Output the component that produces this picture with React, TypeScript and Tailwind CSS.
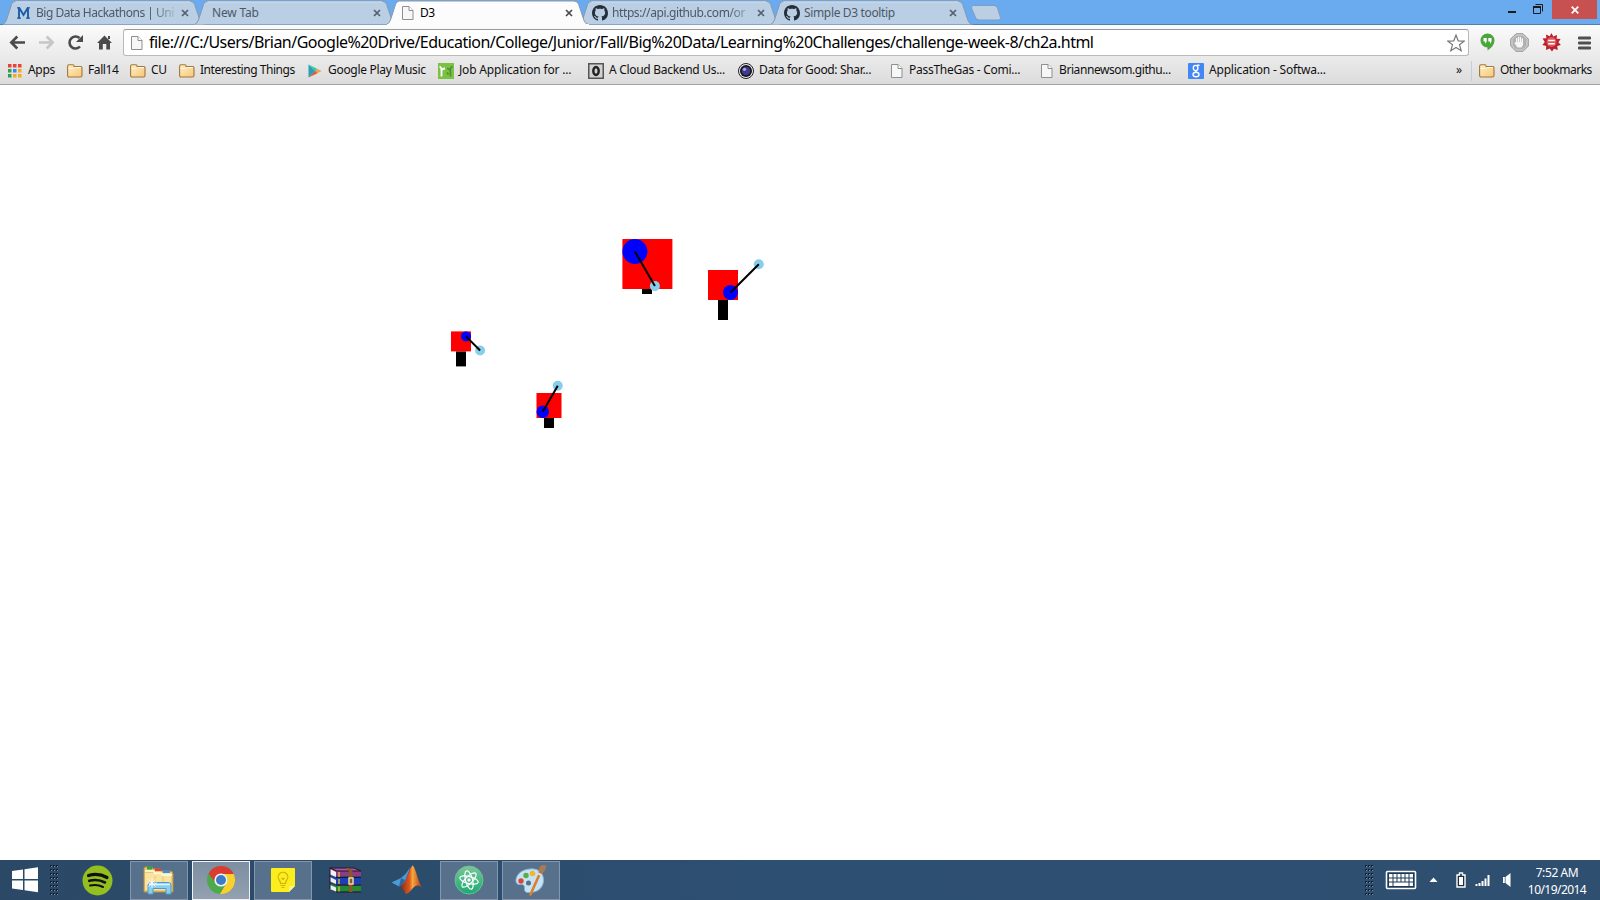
import type { ReactNode } from "react";

const UI = "font-['Noto_Sans','Open_Sans',sans-serif]";

/* ---------- small icons ---------- */

function PageIcon({ className = "" }: { className?: string }) {
  return (
    <svg width="12" height="14" viewBox="0 0 12 14" className={className}>
      <path d="M.5.5h6.500l4 4v9H.5z" fill="#f7f7f7" stroke="#8f8f8f" />
      <path d="M7 .5v4h4" fill="#fff" stroke="#8f8f8f" />
    </svg>
  );
}

function FolderIcon() {
  return (
    <svg width="16" height="14" viewBox="0 0 16 14">
      <defs>
        <linearGradient id="folder" x1="0" y1="0" x2="1" y2="1">
          <stop offset="0" stopColor="#fff0c4" />
          <stop offset="1" stopColor="#f5c678" />
        </linearGradient>
      </defs>
      <path d="M.6 11.500V2.200Q.6.7 2 .7h4q1 0 1.200 1.900h6.600q1.200 0 1.200 1.200v7.700q0 1.500-1.500 1.500h-11.400Q.6 13 .6 11.500z" fill="url(#folder)" stroke="#a5753a" strokeWidth="1.100" />
      <path d="M1.500 4.500h5l1-1h6.500" fill="none" stroke="#fffbe8" />
    </svg>
  );
}

function AppsIcon() {
  const colors = ["#ea4335", "#ea4335", "#ea4335", "#2f9e4f", "#3f83f0", "#f4ac1a", "#2f9e4f", "#f4ac1a", "#f4ac1a"];
  return (
    <svg width="14" height="14" viewBox="0 0 14 14">
      {colors.map((c, i) => (
        <rect key={i} x={(i % 3) * 5} y={Math.floor(i / 3) * 5} width="3.500" height="3.500" fill={c} />
      ))}
    </svg>
  );
}

function PlayIcon() {
  return (
    <svg width="14" height="14" viewBox="0 0 14 14">
      <path d="M.5.5 7.500 7 .5 13.500z" fill="#2d9db8" />
      <path d="M.5.5 9.500 5 7 7.500z" fill="#37c9a4" />
      <path d="M9.500 5 13.500 7l-4 2.300L7.300 7z" fill="#f0a04a" />
      <path d="M.5 13.500 7.300 7l2.200 2.300z" fill="#e0563f" />
    </svg>
  );
}

function JobIcon() {
  return (
    <svg width="16" height="16" viewBox="0 0 16 16">
      <rect width="16" height="16" fill="#7bc142" />
      <path d="M3.500 13.500V8Q3.500 5.500 7 5.500M1.500 3.500Q3.500 4 3.500 8" fill="none" stroke="#fff" strokeWidth="1.800" />
      <path d="M12.500 13.500V9Q12.500 6 9 5.500M14.500 3.500Q12.500 4 12.300 7M9 9.500l1.500 2" fill="none" stroke="#4a8f34" strokeWidth="1.600" />
    </svg>
  );
}

function ZeroIcon() {
  return (
    <svg width="16" height="16" viewBox="0 0 16 16">
      <rect x=".75" y=".75" width="14.500" height="14.500" fill="#d2d2d2" stroke="#555" strokeWidth="1.500" />
      <ellipse cx="8" cy="8" rx="2.700" ry="4" fill="none" stroke="#222" strokeWidth="2.400" />
    </svg>
  );
}

function LensIcon() {
  return (
    <svg width="16" height="16" viewBox="0 0 16 16">
      <circle cx="8" cy="8" r="7.500" fill="#eee" stroke="#222" />
      <circle cx="8" cy="8" r="6" fill="#15151f" />
      <circle cx="8" cy="8" r="4.300" fill="#403b8c" />
      <circle cx="6.500" cy="6.300" r="1.600" fill="#a9a8e2" />
    </svg>
  );
}

function GoogleIcon() {
  return (
    <svg width="16" height="16" viewBox="0 0 16 16">
      <rect width="16" height="16" rx="1" fill="#4387f4" />
      <g fill="none" stroke="#fff" strokeWidth="1.400">
        <ellipse cx="7.600" cy="5" rx="2.300" ry="2.600" />
        <path d="M9 2.300h2.500M8.500 7.500q-1.500.8 0 1.500" />
        <ellipse cx="8" cy="11.500" rx="3" ry="2.200" />
      </g>
    </svg>
  );
}

function GithubIcon() {
  return (
    <svg width="16" height="16" viewBox="0 0 16 16">
      <path
        fill="#26303b"
        d="M8 0C3.580 0 0 3.580 0 8c0 3.540 2.290 6.530 5.470 7.590.4.070.55-.17.55-.38 0-.19-.01-.82-.01-1.490-2.010.37-2.530-.49-2.690-.94-.09-.23-.48-.94-.82-1.130-.28-.15-.68-.52-.01-.53.63-.01 1.080.58 1.230.82.72 1.210 1.870.87 2.330.66.07-.52.28-.87.51-1.070-1.780-.2-3.640-.89-3.640-3.950 0-.87.31-1.590.82-2.150-.08-.2-.36-1.020.08-2.120 0 0 .67-.21 2.200.82.64-.18 1.320-.27 2-.27s1.360.09 2 .27c1.530-1.040 2.200-.82 2.200-.82.44 1.100.16 1.920.08 2.120.51.56.82 1.270.82 2.150 0 3.070-1.870 3.750-3.650 3.950.29.25.54.73.54 1.480 0 1.070-.01 1.930-.01 2.200 0 .21.15.46.55.38A8.010 8.010 0 0 0 16 8c0-4.420-3.580-8-8-8z"
      />
    </svg>
  );
}

function MichiganIcon() {
  return (
    <svg width="13" height="12" viewBox="0 0 13 12">
      <path d="M0 .8h3M10 .8h3M0 11.200h4M9 11.200h4" stroke="#1c5ca6" strokeWidth="1.200" />
      <path d="M2 .5v11M11 .5v11M2 .5 6.500 8 11 .5" fill="none" stroke="#1c5ca6" strokeWidth="1.900" />
    </svg>
  );
}

function CloseIcon({ color }: { color: string }) {
  return (
    <svg width="8" height="8" viewBox="0 0 8 8">
      <path d="M1 1l6 6M7 1 1 7" stroke={color} strokeWidth="1.700" />
    </svg>
  );
}

/* ---------- tab strip ---------- */

type TabProps = { icon?: ReactNode; title: string; titleClass: string; active?: boolean; fade?: boolean };

function Tab({ icon, title, titleClass, active, fade }: TabProps) {
  const mask = fade ? "[mask-image:linear-gradient(to_right,black_84%,transparent_104%)]" : "";
  return (
    <div className={`relative -mr-[12px] h-[25px] w-[204px] shrink-0 ${active ? "z-10" : ""}`}>
      <svg width="206" height="25" viewBox="0 0 206 25" className="absolute inset-0">
        <path
          d="M-1 24.500Q2 24 3.500 20L8.500 4.500Q9.700 1 12.500 1H187Q190.500 1 191.700 4.500L197 20.500Q198.500 24.500 202 24.500"
          fill={active ? "#fcfcfc" : "#bacee4"}
          stroke={active ? "#8899aa" : "#8398ae"}
        />
        {!active && <path d="M13 2H187" stroke="#d3e0ef" />}
        {active && <path d="M0 24.500H202" stroke="#fcfcfc" />}
      </svg>
      <div className={`relative flex h-full items-center pr-[18px] pt-[1px] ${icon ? "pl-[12px]" : "pl-[17px]"}`}>
        {icon && <span className="mr-[4px] flex w-[17px] shrink-0 justify-center">{icon}</span>}
        <span className={`min-w-0 flex-1 text-[12px] leading-[16px] whitespace-nowrap ${mask} ${active ? "text-black" : "text-[#4b5968]"} ${titleClass}`}>
          {title}
        </span>
        <span className="ml-[7px] shrink-0">
          <CloseIcon color={active ? "#4a4a4a" : "#55606c"} />
        </span>
      </div>
    </div>
  );
}

function TabStrip() {
  return (
    <div className="flex h-[25px] bg-[#69abee] shadow-[inset_0_-1px_0_#527fae]">
      <div className="flex pl-[3px]">
        <Tab icon={<MichiganIcon />} title="Big Data Hackathons | Uni" titleClass="tracking-[-0.48px]" fade />
        <Tab title="New Tab" titleClass="tracking-[-0.2px]" />
        <Tab icon={<PageIcon />} title="D3" titleClass="tracking-[-0.5px]" active />
        <Tab icon={<GithubIcon />} title="https://api.github.com/or" titleClass="tracking-[-0.4px]" fade />
        <Tab icon={<GithubIcon />} title="Simple D3 tooltip" titleClass="tracking-[-0.35px]" />
      </div>
      <svg width="32" height="16" viewBox="0 0 32 16" className="mt-[5px] ml-[7px]">
        <path d="M3.500.5H24q2.500 0 3.500 2.500l3 9.500q.5 2.500-2 2.500H9.500q-3 0-4-2.500L1.500 3Q1 .5 3.500.5z" fill="#bacee4" stroke="#7f9dbd" />
      </svg>
      <div className="ml-auto flex h-[19px] pr-[3px]">
        <svg width="12" height="19" viewBox="0 0 12 19" className="mr-[14px]">
          <path d="M2 12h8" stroke="#1a1a1a" strokeWidth="2" />
        </svg>
        <svg width="12" height="19" viewBox="0 0 12 19" className="mr-[8px]">
          <path d="M1.500 6.500h7v7h-7zM3.500 4.500h7v7" fill="none" stroke="#1a1a1a" />
          <path d="M1 7h8" stroke="#1a1a1a" strokeWidth="2" />
        </svg>
        <div className="flex w-[45px] items-center justify-center bg-[#c75050]">
          <svg width="8" height="8" viewBox="0 0 8 8">
            <path d="M.7.7l6.600 6.600M7.300.7.7 7.300" stroke="#fff" strokeWidth="1.700" />
          </svg>
        </div>
      </div>
    </div>
  );
}

/* ---------- toolbar ---------- */

function Toolbar() {
  return (
    <div className="flex h-[34px] shrink-0 items-center pt-[1px]">
      <svg width="112" height="22" viewBox="0 0 112 22" className="ml-[6px]">
        <g fill="none" stroke="#4b4b4b" strokeWidth="2.600">
          <path d="M19 10.500H6M11.300 4.500 5.300 10.500l6 6" />
          <path d="M33 10.500h13M40.700 4.500l6 6-6 6" stroke="#c6c6c6" />
          <path d="M74 14.500A6 6 0 1 1 73.500 6" />
        </g>
        <path d="M77 3v7h-7z" fill="#4b4b4b" />
        <path d="M98.500 3.500 106 11h-2v6.500h-3.700V12h-3.500v5.500H93V11h-2zM102 4h2v3h-2z" fill="#4b4b4b" />
      </svg>
      <div className="ml-[5px] flex h-[27px] w-[1346px] shrink-0 items-center rounded-[3px] border border-[#b9b9b9] border-t-[#999] bg-white pl-[7px]">
        <PageIcon />
        <span className="ml-[6px] pb-[2px] text-[16px] leading-[22px] tracking-[-0.53px] whitespace-nowrap text-black">
          file:///C:/Users/Brian/Google%20Drive/Education/College/Junior/Fall/Big%20Data/Learning%20Challenges/challenge-week-8/ch2a.html
        </span>
        <svg width="18" height="18" viewBox="0 0 18 18" className="mr-[3px] ml-auto">
          <path d="M9 1l2.200 5.800 6 .3-4.700 3.700 1.700 5.900L9 13.400l-5.200 3.300 1.700-5.900L.8 7.100l6-.3z" fill="#fff" stroke="#777" strokeWidth="1.200" />
        </svg>
      </div>
      <svg width="15" height="19" viewBox="0 0 15 19" className="ml-[11px]">
        <path d="M7.500.5a7 7 0 0 1 7 7q0 5.500-7 10v-3a7 7 0 0 1 0-14z" fill="#4ba53c" />
        <path d="M3.500 5h3.200v3.500L5.200 11V8.500H3.500zM8.300 5h3.200v3.500L10 11V8.500H8.300z" fill="#fff" />
      </svg>
      <svg width="19" height="19" viewBox="0 0 19 19" className="ml-[15px]">
        <path d="M6 .7h7L18.300 6v7L13 18.300H6L.7 13V6z" fill="#b0b0b0" stroke="#999" />
        <path d="M6.300 2h6.400L17 6.300v6.400L12.700 17H6.300L2 12.700V6.300z" fill="none" stroke="#d8d8d8" />
        <path d="M6.700 5.500v5M8.600 4.500v6M10.500 4.500v6M12.400 6v5" fill="none" stroke="#fafafa" strokeWidth="1.300" strokeLinecap="round" />
        <path d="M6 9h7v3l-1.500 2.500h-4L5 11l-.7-1.300z" fill="#f4f4f4" />
      </svg>
      <svg width="19" height="19" viewBox="0 0 19 19" className="ml-[13px]">
        <path d="M9.500 0l1.800 3.500L15 2l-.4 3.700 4 .3-2.200 3.200 2.500 2.800-3.700 1 .6 4-3.800-1.200L10 18.500 7.700 15.500 4 17l.2-4L.4 12l2.400-3L.5 5.500l3.900-.3L4 1.500l3.700 1.800z" fill="#b9222c" />
        <circle cx="9.500" cy="9" r="5" fill="#e2545b" />
        <path d="M6.200 7.500h6.600M6.200 10.700h6.600" stroke="#fff" strokeWidth="1.600" />
      </svg>
      <svg width="13" height="14" viewBox="0 0 13 14" className="ml-[17px]">
        <path d="M1 2h11M1 7h11M1 12h11" stroke="#505050" strokeWidth="2.800" strokeLinecap="round" />
      </svg>
    </div>
  );
}

/* ---------- bookmarks ---------- */

function Bookmark({ icon, label, width, text }: { icon: ReactNode; label: string; width: string; text: string }) {
  return (
    <div className={`flex shrink-0 items-center ${width}`}>
      <span className="shrink-0">{icon}</span>
      <span className={`pb-[2px] whitespace-nowrap ${text}`}>{label}</span>
    </div>
  );
}

function Bookmarks() {
  return (
    <div className="flex h-[24px] items-center pl-[8px] text-[12px] leading-[16px] text-[#111]">
      <Bookmark icon={<AppsIcon />} label="Apps" width="w-[59px]" text="ml-[6px] tracking-[-0.3px]" />
      <Bookmark icon={<FolderIcon />} label="Fall14" width="w-[63px]" text="ml-[5px] tracking-[-0.4px]" />
      <Bookmark icon={<FolderIcon />} label="CU" width="w-[49px]" text="ml-[5px] tracking-[-0.3px]" />
      <Bookmark icon={<FolderIcon />} label="Interesting Things" width="w-[129px]" text="ml-[5px] tracking-[-0.45px]" />
      <Bookmark icon={<PlayIcon />} label="Google Play Music" width="w-[130px]" text="ml-[6px] tracking-[-0.3px]" />
      <Bookmark icon={<JobIcon />} label="Job Application for ..." width="w-[150px]" text="ml-[5px] tracking-[-0.18px]" />
      <Bookmark icon={<ZeroIcon />} label="A Cloud Backend Us..." width="w-[150px]" text="ml-[5px] tracking-[-0.3px]" />
      <Bookmark icon={<LensIcon />} label="Data for Good: Shar..." width="w-[153px]" text="ml-[5px] tracking-[-0.34px]" />
      <Bookmark icon={<PageIcon />} label="PassTheGas - Comi..." width="w-[150px]" text="ml-[6px] tracking-[-0.27px]" />
      <Bookmark icon={<PageIcon />} label="Briannewsom.githu..." width="w-[147px]" text="ml-[6px] tracking-[-0.42px]" />
      <Bookmark icon={<GoogleIcon />} label="Application - Softwa..." width="w-[150px]" text="ml-[5px] tracking-[-0.2px]" />
      <span className="ml-auto pb-[2px]">»</span>
      <span className="ml-[9px] h-[20px] w-px bg-[#c5ced6]" />
      <span className="w-[7px]" />
      <Bookmark icon={<FolderIcon />} label="Other bookmarks" width="w-[121px]" text="ml-[5px] tracking-[-0.5px]" />
    </div>
  );
}

/* ---------- chart ---------- */

type Tower = { x: number; y: number; size: number; trunk: number; cx: number; cy: number; r: number; ex: number; ey: number };

const towers: Tower[] = [
  { x: 622.4, y: 154, size: 50, trunk: 5, cx: 634.9, cy: 166.5, r: 12.5, ex: 654.9, ey: 201.1 },
  { x: 708, y: 185, size: 30, trunk: 20, cx: 730.5, cy: 207.5, r: 7.5, ex: 758.8, ey: 179.2 },
  { x: 451, y: 246.4, size: 20, trunk: 15, cx: 466, cy: 251.4, r: 5, ex: 480.1, ey: 265.5 },
  { x: 536.5, y: 308, size: 25, trunk: 10, cx: 542.75, cy: 326.75, r: 6.25, ex: 557.75, ey: 300.8 },
];

function Chart() {
  return (
    <svg width="1600" height="775" viewBox="0 0 1600 775">
      {towers.map((t) => (
        <g key={t.x}>
          <rect x={Math.floor(t.x + t.size / 2 - 5)} y={t.y + t.size} width="10" height={t.trunk} fill="#000" />
          <rect x={t.x} y={t.y} width={t.size} height={t.size} fill="red" />
          <circle cx={t.cx} cy={t.cy} r={t.r} fill="blue" />
          <circle cx={t.ex} cy={t.ey} r="5" fill="skyblue" />
          <line x1={t.cx} y1={t.cy} x2={t.ex} y2={t.ey} stroke="#000" strokeWidth="2" />
        </g>
      ))}
    </svg>
  );
}

/* ---------- taskbar ---------- */

function TaskButton({ children, state = "idle" }: { children: ReactNode; state?: "idle" | "open" | "front" }) {
  const look =
    state === "front"
      ? "border-[#f0f3f6] bg-linear-to-b from-[#7d8ea1] to-[#93a1b1]"
      : state === "open"
        ? "border-[#8496aa] bg-[#57708b]"
        : "border-transparent";
  return <div className={`mr-[4px] flex h-[39px] w-[58px] shrink-0 items-center justify-center border ${look}`}>{children}</div>;
}

function Grip() {
  const rows = [0, 1, 2, 3, 4, 5, 6, 7];
  return (
    <svg width="9" height="32" viewBox="0 0 9 32">
      {rows.map((r) =>
        [0, 1, 2].map((c) => (
          <g key={`${r}-${c}`}>
            <rect x={c * 3} y={r * 4 + 1} width="2" height="2" fill="#0f1f30" />
            <rect x={c * 3 + 1} y={r * 4 + 2} width="1" height="1" fill="#7f96ac" />
          </g>
        )),
      )}
    </svg>
  );
}

function SpotifyIcon() {
  return (
    <svg width="31" height="31" viewBox="0 0 31 31">
      <circle cx="15.500" cy="15.500" r="15" fill="#93c01f" />
      <g fill="none" stroke="#111" strokeLinecap="round">
        <path d="M6.500 10.500q10-2.800 18.500 2" strokeWidth="3.200" />
        <path d="M7.300 15.800q8.500-2.200 15.700 1.700" strokeWidth="2.600" />
        <path d="M8 20.500q7.500-1.500 13 1.500" strokeWidth="2" />
      </g>
    </svg>
  );
}

function ExplorerIcon() {
  return (
    <svg width="32" height="30" viewBox="0 0 32 30">
      <path d="M1 27V4q0-2 1.500-2H9l1 2h7l1 2h9q3 0 3 3v18z" fill="#e9c877" stroke="#b98f3c" />
      <path d="M2 25V8h26v17z" fill="#f8e3a0" />
      <path d="M4 1.500h5v3H4z" fill="#25a843" />
      <path d="M12 3.500h6v2.500h-6z" fill="#d8453b" />
      <path d="M20 5.500h7v2.500h-7z" fill="#3a8de0" />
      <path d="M2 6h8.500l1 2H18l1 2h10" fill="none" stroke="#fffbe2" strokeWidth="1.500" />
      <path d="M12 11v7M20 11v7" stroke="#e3c470" />
      <path d="M5 29V20q0-2.500 2.500-2.500h18q2.500 0 2.500 2.500v9h-5v-5.500H10V29z" fill="#8bcdf0" stroke="#4d9dcc" />
      <path d="M6 19.500h21" stroke="#d9f3ff" strokeWidth="1.500" />
      <path d="M9 13v10M4 18h10M5.500 14.500l7 7M12.500 14.500l-7 7" stroke="#fff" strokeWidth=".8" />
    </svg>
  );
}

function ChromeIcon() {
  return (
    <svg width="30" height="30" viewBox="0 0 30 30">
      <circle cx="15" cy="15" r="14" fill="#4da94a" />
      <path d="M2.600 8.500A14 14 0 0 1 27.700 9H15a6.200 6.200 0 0 0-5.600 8.500z" fill="#dc3b31" />
      <path d="M27.700 9A14 14 0 0 1 14 29l6.400-10.800A6.200 6.200 0 0 0 17 9z" fill="#fbd02c" />
      <circle cx="15" cy="15" r="6.600" fill="#f4f4f4" />
      <circle cx="15" cy="15" r="5" fill="#3a7cc9" />
    </svg>
  );
}

function KeepIcon() {
  return (
    <svg width="24" height="24" viewBox="0 0 24 24">
      <path d="M1 0h22q1 0 1 1v17l-6 6H1q-1 0-1-1V1q0-1 1-1z" fill="#fcee1c" />
      <path d="M24 18h-6v6z" fill="#f8f48b" />
      <path d="M9.500 15.500q0-2-1.300-3.500a4.800 4.800 0 1 1 7.600 0q-1.300 1.500-1.300 3.500zM9.500 17.500h5M10.500 19.500h3M10.500 10l1.500 1.500 1.500-1.500" fill="none" stroke="#d2b010" strokeWidth="1.200" />
    </svg>
  );
}

function RarIcon() {
  return (
    <svg width="33" height="26" viewBox="0 0 33 26">
      <path d="M1 1h24l7 3v5H7L1 6z" fill="#8c3d83" />
      <path d="M1 2l6 3v5L1 7.500z" fill="#f2f2f2" />
      <path d="M1 9l6 2h25v6H7l-6-3z" fill="#1c3fb5" />
      <path d="M1 10l6 3v4l-6-2.500z" fill="#eee" />
      <path d="M1 17l6 2h25v5.500H7L1 22z" fill="#218c2f" />
      <path d="M1 18l6 2.500v4L1 22z" fill="#eee" />
      <path d="M1 1h24l7 3H8z" fill="#a35a99" />
      <path d="M1 1h24l7 3H8zM7 10.500h25M7 18h25M7 25h25M1 1v21" fill="none" stroke="#2a1230" />
      <path d="M10 5v5M10 12v5M10 19.500v5" stroke="#d4b24b" strokeWidth="1.500" />
      <path d="M17 1l3 3v21h3.500V4l-3-3z" fill="#8c5727" />
      <path d="M20 11h4v6h-4z" fill="none" stroke="#eadb9c" strokeWidth="1.500" />
    </svg>
  );
}

function MatlabIcon() {
  return (
    <svg width="32" height="30" viewBox="0 0 32 30">
      <defs>
        <linearGradient id="peak" x1="0" y1="0" x2="1" y2="0">
          <stop offset="0" stopColor="#7c2517" />
          <stop offset=".45" stopColor="#e0591e" />
          <stop offset=".58" stopColor="#f7a83c" />
          <stop offset="1" stopColor="#b5321a" />
        </linearGradient>
      </defs>
      <path d="M.5 17.500 10 13l4.500-4 5-7-7 18L8 21.500z" fill="#4c9bd6" />
      <path d="M10 13l4 2-3 6-3 .5z" fill="#286a9f" />
      <path d="M21.500.5c3 1 5 15 9.500 22-3.500-3-6-2.500-8.500 0S18 28.500 14.500 29c-1-3-3-6.500-6-7.500C15 20 18 3.500 21.500.5z" fill="url(#peak)" />
    </svg>
  );
}

function AtomIcon() {
  return (
    <svg width="30" height="30" viewBox="0 0 30 30">
      <defs>
        <linearGradient id="atom" x1="0" y1="0" x2="0" y2="1">
          <stop offset="0" stopColor="#7cc799" />
          <stop offset="1" stopColor="#18ab72" />
        </linearGradient>
      </defs>
      <circle cx="15" cy="15" r="14" fill="url(#atom)" stroke="#6ebd95" />
      <g fill="none" stroke="#fff" strokeWidth="1.200">
        <ellipse cx="15" cy="15" rx="9.500" ry="3.500" transform="rotate(15 15 15)" />
        <ellipse cx="15" cy="15" rx="9.500" ry="3.500" transform="rotate(75 15 15)" />
        <ellipse cx="15" cy="15" rx="9.500" ry="3.500" transform="rotate(135 15 15)" />
      </g>
      <circle cx="15" cy="15" r="1.700" fill="#fff" />
    </svg>
  );
}

function PaintIcon() {
  return (
    <svg width="32" height="32" viewBox="0 0 32 32">
      <path d="M15 5C23 4 29 9 28.500 17S21 29 13 28.500c-4 0-3.500-3-3.500-5s-1-3.500-4-3-5-1.500-4.500-5C2 9 8 5.500 15 5z" fill="#c7e3f3" stroke="#81b5d6" />
      <circle cx="6" cy="17" r="2.700" fill="#d94836" />
      <circle cx="11" cy="11.500" r="2.700" fill="#5aad42" />
      <circle cx="17.500" cy="9.500" r="2.800" fill="#f3b52f" />
      <circle cx="13.500" cy="19" r="2.500" fill="#53708c" />
      <path d="M26 7 15.500 30.500" stroke="#d9802e" strokeWidth="2.600" strokeLinecap="round" />
      <path d="M23.500 9q0-5.500 2-7 3-2 6 0-.5 4-5 8.500z" fill="#a87a55" />
      <path d="M23 9.500l3.500 1.500" stroke="#ddd" strokeWidth="2" />
    </svg>
  );
}

function Tray() {
  return (
    <div className="ml-auto flex items-center">
      <Grip />
      <svg width="32" height="20" viewBox="0 0 32 20" className="ml-[11px]">
        <rect x="1.500" y="1.500" width="29" height="17" rx="1" fill="#1c3a58" stroke="#fff" strokeWidth="1.600" />
        <rect x="4" y="4" width="24" height="12" fill="#fff" />
        <path d="M4 8h24M4 12h24M8 4v8M12 4v8M16 4v8M20 4v8M24 4v12M8 12v4" stroke="#1c3a58" strokeWidth="1" />
      </svg>
      <svg width="9" height="6" viewBox="0 0 9 6" className="ml-[12px]">
        <path d="M4.500.5l4 4.500h-8z" fill="#fff" />
      </svg>
      <svg width="10" height="16" viewBox="0 0 10 16" className="ml-[18px]">
        <path d="M1 3h2.500V1h3v2H9v12H1z" fill="#1b2d40" stroke="#fff" strokeWidth="1.400" />
        <rect x="3" y="5" width="4" height="8" fill="#fff" />
      </svg>
      <svg width="16" height="12" viewBox="0 0 16 12" className="ml-[9px]">
        <path d="M1.500 12v-2M4.500 12V9M7.500 12V7M10.500 12V4.500M13.500 12V1" stroke="#fff" strokeWidth="2" />
      </svg>
      <svg width="8" height="16" viewBox="0 0 8 16" className="ml-[12px]">
        <path d="M0 5h1.800v6H0zM2.500 5 7.500 1v14L2.500 11z" fill="#fff" />
      </svg>
      <div className="ml-[16px] flex w-[60px] flex-col items-center pt-[2px] text-[12px] leading-[17px] whitespace-nowrap text-white">
        <span className="tracking-[-0.4px]">7:52 AM</span>
        <span className="tracking-[-0.55px]">10/19/2014</span>
      </div>
      <span className="w-[13px]" />
    </div>
  );
}

function Taskbar() {
  return (
    <div className="flex h-[40px] shrink-0 items-center bg-linear-to-r from-[#2b4966] via-[#2d4f72] to-[#2f4f70]">
      <svg width="27" height="26" viewBox="0 0 27 26" className="ml-[12px]">
        <path d="M0 4 11 2.500V12H0zM12.500 2.200 26 .3V12H12.500zM0 13.500h11V23L0 21.500zM12.500 13.500H26v11.700l-13.500-2z" fill="#fff" />
      </svg>
      <span className="ml-[11px] flex">
        <Grip />
      </span>
      <span className="w-[9px]" />
      <TaskButton><SpotifyIcon /></TaskButton>
      <TaskButton state="open"><ExplorerIcon /></TaskButton>
      <TaskButton state="front"><ChromeIcon /></TaskButton>
      <TaskButton state="open"><KeepIcon /></TaskButton>
      <TaskButton><RarIcon /></TaskButton>
      <TaskButton><MatlabIcon /></TaskButton>
      <TaskButton state="open"><AtomIcon /></TaskButton>
      <TaskButton state="open"><PaintIcon /></TaskButton>
      <Tray />
    </div>
  );
}

export default function App() {
  return (
    <div className={`flex h-[900px] w-[1600px] flex-col overflow-hidden bg-white ${UI}`}>
      <TabStrip />
      <div className="flex h-[60px] shrink-0 flex-col border-b border-[#a3a3a3] bg-linear-to-b from-[#fbfbfb] to-[#dcdcdc]">
        <Toolbar />
        <Bookmarks />
      </div>
      <div className="h-[775px] shrink-0">
        <Chart />
      </div>
      <Taskbar />
    </div>
  );
}
